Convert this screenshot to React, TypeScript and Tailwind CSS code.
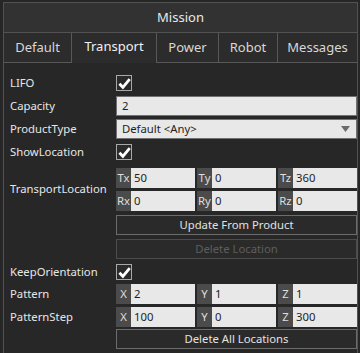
import React from "react";

function Check({ checked = true }: { checked?: boolean }) {
  return (
    <div className="w-[16px] h-[16px] border border-[#a8a8a8] bg-[#2a2a2a] flex items-center justify-center">
      {checked && (
        <svg width="13" height="13" viewBox="0 0 12 12" aria-hidden="true">
          <path d="M1.3 6.2 L4.5 9.5 L10.8 1.9" fill="none" stroke="#ffffff" strokeWidth="2.6" strokeLinejoin="miter" />
        </svg>
      )}
    </div>
  );
}

function TextBox({ value, arrow }: { value: string; arrow?: boolean }) {
  return (
    <div className="h-[20px] border border-[#707070] bg-[#e8e8e8] text-[#1e1e1e] text-[11.3px] pl-[5px] pr-[6px] flex items-center justify-between">
      <span>{value}</span>
      {arrow && (
        <svg width="9" height="6" viewBox="0 0 9 6" aria-hidden="true">
          <path d="M0 0 H9 L4.5 6 Z" fill="#6b6b6b" />
        </svg>
      )}
    </div>
  );
}

function Axis({ label, value }: { label: string; value: string }) {
  return (
    <div className="h-[20px] flex">
      <div className="w-[15px] bg-[#4b4b4b] text-[#dedede] text-[11.3px] flex items-center justify-center">{label}</div>
      <div className="flex-1 bg-[#e8e8e8] text-[#1e1e1e] text-[11.3px] pl-[3px] flex items-center">{value}</div>
    </div>
  );
}

function AxisRow({ items }: { items: [string, string][] }) {
  return (
    <div className="grid grid-cols-3 gap-[2px]">
      {items.map(([l, v]) => (
        <Axis key={l} label={l} value={v} />
      ))}
    </div>
  );
}

function Btn({ text, disabled }: { text: string; disabled?: boolean }) {
  return (
    <div
      className={
        disabled
          ? "h-[20px] border border-[#4c4c4c] bg-[#2a2a2a] text-[#5e5e5e] text-[11.3px] flex items-center justify-center"
          : "h-[20px] border border-[#6c6c6c] bg-[#2a2a2a] text-[#e2e2e2] text-[11.3px] flex items-center justify-center"
      }
    >
      {text}
    </div>
  );
}

function Row({ label, children, className = "" }: { label: string; children?: React.ReactNode; className?: string }) {
  return (
    <div className={"flex items-center h-[20px] " + className}>
      <div className="w-[112px] pl-[6px] text-[11.3px] text-[#e6e6e6]">{label}</div>
      <div className="flex-1">{children}</div>
    </div>
  );
}

const tabs = [
  { name: "Default", w: "w-[68px]", active: false },
  { name: "Transport", w: "w-[85px]", active: true },
  { name: "Power", w: "w-[62px]", active: false },
  { name: "Robot", w: "w-[59px]", active: false },
  { name: "Messages", w: "w-[79px]", active: false },
];

export default function App() {
  return (
    <div className="w-[360px] h-[353px] bg-[#262626] pt-[2px] pl-[3px] overflow-hidden font-['Noto_Sans',sans-serif]">
      <div className="w-[355px] h-[351px] border-x border-t border-[#525252] bg-[#272727] flex flex-col">
        {/* title */}
        <div className="h-[30px] border-b border-[#525252] bg-[#323232] text-[13px] text-[#e8e8e8] flex items-center justify-center">
          Mission
        </div>

        {/* tabs */}
        <div className="flex h-[30px]">
          {tabs.map((t, i) => (
            <div
              key={t.name}
              className={
                (t.active
                  ? "bg-[#2c2c2c] text-[#f0f0f0] pb-[2px] "
                  : "bg-[#2c2c2c] text-[#d8d8d8] border-b border-[#585858] ") +
                (i < tabs.length - 1 ? "border-r border-r-[#585858] " : "") +
                t.w +
                " text-[13px] flex items-center justify-center"
              }
            >
              {t.name}
            </div>
          ))}
        </div>

        {/* properties */}
        <div className="flex flex-col pt-[10px]">
          <Row label="LIFO">
            <Check />
          </Row>
          <Row label="Capacity" className="mt-[3px]">
            <TextBox value="2" />
          </Row>
          <Row label="ProductType" className="mt-[3px]">
            <TextBox value="Default <Any>" arrow />
          </Row>
          <Row label="ShowLocation" className="mt-[3px]">
            <Check />
          </Row>

          <div className="flex items-center mt-[6px]">
            <div className="w-[112px] pl-[6px] text-[11.3px] text-[#e6e6e6]">TransportLocation</div>
            <div className="flex-1 flex flex-col gap-[3px]">
              <AxisRow items={[["Tx", "50"], ["Ty", "0"], ["Tz", "360"]]} />
              <AxisRow items={[["Rx", "0"], ["Ry", "0"], ["Rz", "0"]]} />
            </div>
          </div>

          <Row label="" className="mt-[4px]">
            <Btn text="Update From Product" />
          </Row>
          <Row label="" className="mt-[4px]">
            <Btn text="Delete Location" disabled />
          </Row>
          <Row label="KeepOrientation" className="mt-[3px]">
            <Check />
          </Row>
          <Row label="Pattern" className="mt-[2px]">
            <AxisRow items={[["X", "2"], ["Y", "1"], ["Z", "1"]]} />
          </Row>
          <Row label="PatternStep" className="mt-[3px]">
            <AxisRow items={[["X", "100"], ["Y", "0"], ["Z", "300"]]} />
          </Row>
          <Row label="" className="mt-[2px]">
            <Btn text="Delete All Locations" />
          </Row>
        </div>
      </div>
    </div>
  );
}
